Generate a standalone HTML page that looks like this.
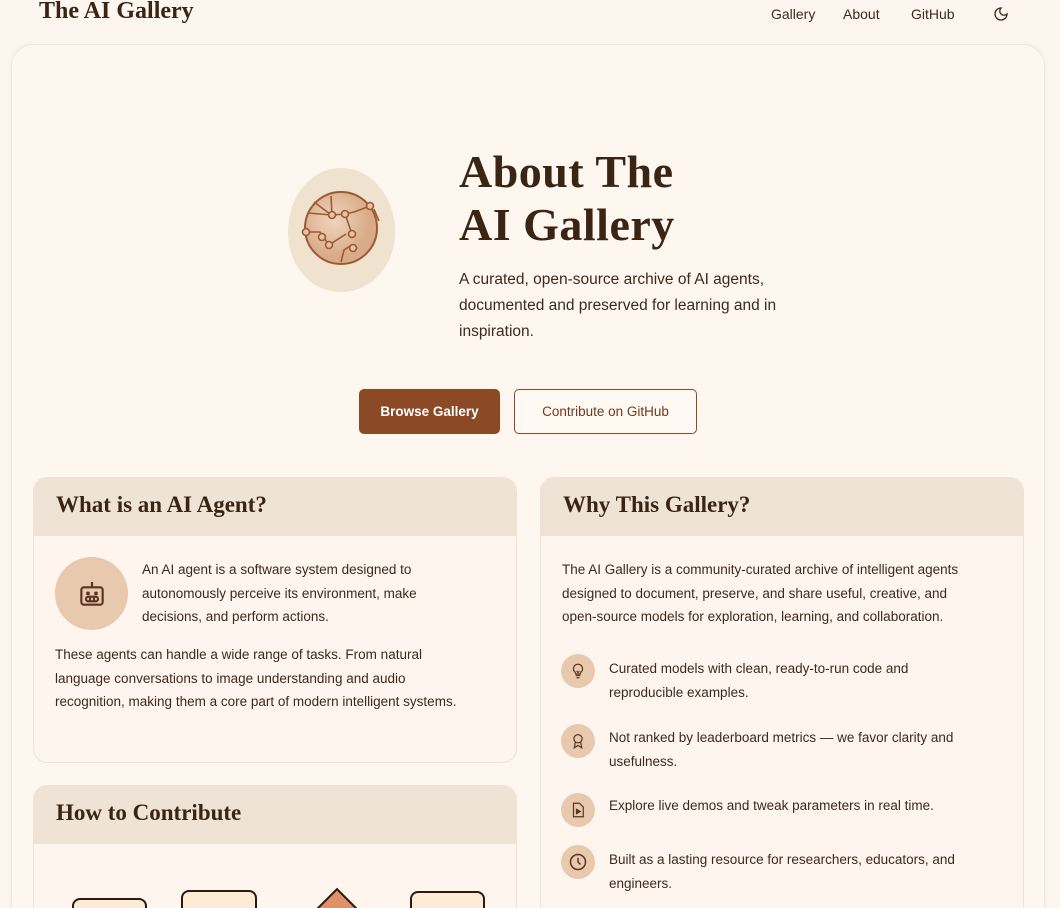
<!DOCTYPE html>
<html style="height:908px;overflow:hidden"><head><style>
*{box-sizing:border-box;margin:0;padding:0}
body{width:1060px;height:908px;overflow:hidden;background:#fdf6ef;font-family:"Liberation Sans",sans-serif;color:#3d2a1e;position:relative}
.serif{font-family:"Liberation Serif",serif;font-weight:bold;color:#3a2414}
.nav{position:absolute;top:0;left:0;right:0;height:30px}
.logo{position:absolute;left:39px;top:-2px;font-size:24px}
.nl{position:absolute;top:6px;font-size:14px;color:#3d2a1e}
.main{position:absolute;left:11px;top:44px;width:1034px;height:864px;border:1px solid #f1e6da;border-bottom:none;border-radius:22px 22px 0 0;background:#fef7f0;box-shadow:0 0 6px rgba(200,170,140,.15)}
.card{position:absolute;border:1px solid #efe2d4;border-radius:14px;background:#fdf5ee;overflow:hidden}
.cut{border-bottom:none;border-radius:14px 14px 0 0}
.ch{height:58px;background:#efe3d6;padding:14px 22px;font-size:23px}
.txt{font-size:13.5px;line-height:23.5px;color:#3d2a1e}
.ic{position:absolute;width:34px;height:34px;border-radius:50%;background:#e8c9ad;display:flex;align-items:center;justify-content:center}
</style></head><body>
<div class="nav">
<div class="logo serif">The AI Gallery</div>
<div class="nl" style="left:771px">Gallery</div>
<div class="nl" style="left:843px">About</div>
<div class="nl" style="left:911px">GitHub</div>
<svg style="position:absolute;left:993px;top:6px" width="16" height="16" viewBox="0 0 24 24" fill="none" stroke="#3d2a1e" stroke-width="2"><path d="M12 3a6 6 0 0 0 9 9 9 9 0 1 1-9-9z"/></svg>
</div>
<div class="main"></div>
<svg style="position:absolute;left:286px;top:166px" width="110" height="128" viewBox="0 0 110 128">
<defs><radialGradient id="g" cx="0.4" cy="0.4"><stop offset="0" stop-color="#efd5bd"/><stop offset="1" stop-color="#d9ab88"/></radialGradient></defs>
<path d="M55 2C85 2 109 30 109 66c0 36-26 60-54 60C25 126 2 100 2 66 2 30 25 2 55 2z" fill="#efe2cf"/>
<circle cx="55" cy="62" r="36" fill="url(#g)" stroke="#9a5a34" stroke-width="2"/>
<g stroke="#9a5a34" stroke-width="1.6" fill="#e8c2a0">
<path d="M20 66 L34 66 L43 79 L60 68 M45 30 L46 49 L59 48 L68 46 L84 40 M28 36 L44 48 M59 48 L66 68 M88 43 L93 55 M55 96 L58 84 L64 80 M22 47 L46 49" fill="none"/>
<circle cx="20" cy="66" r="3.5"/><circle cx="36" cy="71" r="3.5"/><circle cx="46" cy="49" r="3.5"/><circle cx="66" cy="68" r="3.5"/><circle cx="84" cy="40" r="3.5"/><circle cx="59" cy="48" r="3.5"/><circle cx="43" cy="79" r="3.5"/><circle cx="67" cy="82" r="3.5"/>
</g></svg>
<div class="serif" style="position:absolute;left:459px;top:145px;font-size:46px;line-height:53px;letter-spacing:0.5px">About The<br>AI Gallery</div>
<div style="position:absolute;left:459px;top:267px;width:345px;font-size:15.5px;line-height:26px;color:#3d2a1e">A curated, open-source archive of AI agents, documented and preserved for learning and in inspiration.</div>
<div style="position:absolute;left:359px;top:389px;width:141px;height:45px;background:#8b4a25;border-radius:5px;color:#fff;font-size:13.5px;font-weight:bold;display:flex;align-items:center;justify-content:center">Browse Gallery</div>
<div style="position:absolute;left:514px;top:389px;width:183px;height:45px;border:1px solid #8b4a25;border-radius:5px;color:#6b3a1e;font-size:13.5px;display:flex;align-items:center;justify-content:center;background:#fff9f3">Contribute on GitHub</div>

<div class="card" style="left:33px;top:477px;width:484px;height:286px">
<div class="ch serif">What is an AI Agent?</div>
<div style="position:absolute;left:21px;top:79px;width:73px;height:73px;border-radius:50%;background:#e8c9ad;display:flex;align-items:center;justify-content:center">
<svg width="32" height="32" viewBox="0 0 24 24" fill="none" stroke="#5a3420" stroke-width="1.6"><rect x="4" y="7" width="16" height="13" rx="2"/><path d="M12 3v4"/><circle cx="9" cy="11.5" r=".6" fill="#5a3420"/><circle cx="15" cy="11.5" r=".6" fill="#5a3420"/><rect x="7.5" y="14" width="9" height="3.5" rx="1.7"/><path d="M10.5 14v3.5M13.5 14v3.5"/></svg></div>
<div class="txt" style="position:absolute;left:108px;top:80px;width:310px">An AI agent is a software system designed to autonomously perceive its environment, make decisions, and perform actions.</div>
<div class="txt" style="position:absolute;left:21px;top:165px;width:410px">These agents can handle a wide range of tasks. From natural language conversations to image understanding and audio recognition, making them a core part of modern intelligent systems.</div>
</div>

<div class="card cut" style="left:33px;top:785px;width:484px;height:123px">
<div class="ch serif">How to Contribute</div>
<div style="position:absolute;left:38px;top:112px;width:75px;height:40px;border:2.5px solid #2a1a10;border-radius:8px;background:#fcebd5"></div>
<div style="position:absolute;left:147px;top:104px;width:76px;height:40px;border:2.5px solid #2a1a10;border-radius:8px;background:#fcebd5"></div>
<div style="position:absolute;left:283px;top:110px;width:40px;height:40px;border:2.5px solid #2a1a10;background:#e0916a;transform:rotate(45deg)"></div>
<div style="position:absolute;left:376px;top:105px;width:75px;height:40px;border:2.5px solid #2a1a10;border-radius:8px;background:#fcebd5"></div>
</div>

<div class="card cut" style="left:540px;top:477px;width:484px;height:431px">
<div class="ch serif">Why This Gallery?</div>
<div class="txt" style="position:absolute;left:21px;top:80px;width:415px">The AI Gallery is a community-curated archive of intelligent agents designed to document, preserve, and share useful, creative, and open-source models for exploration, learning, and collaboration.</div>
<div class="ic" style="left:20px;top:176px"><svg width="18" height="18" viewBox="0 0 24 24" fill="none" stroke="#5a3420" stroke-width="1.6"><path d="M9 18h6M10 21h4M12 3a6 6 0 0 0-4 10.5c.7.7 1 1.5 1 2.5h6c0-1 .3-1.8 1-2.5A6 6 0 0 0 12 3z"/><path d="M10 12l2 2 2-2"/></svg></div>
<div class="txt" style="position:absolute;left:68px;top:179px;width:340px">Curated models with clean, ready-to-run code and reproducible examples.</div>
<div class="ic" style="left:20px;top:246px"><svg width="18" height="18" viewBox="0 0 24 24" fill="none" stroke="#5a3420" stroke-width="1.6"><circle cx="12" cy="9" r="5.5"/><path d="M8.5 13.5L7 21l5-3 5 3-1.5-7.5"/></svg></div>
<div class="txt" style="position:absolute;left:68px;top:248px;width:380px">Not ranked by leaderboard metrics — we favor clarity and usefulness.</div>
<div class="ic" style="left:20px;top:315px"><svg width="18" height="18" viewBox="0 0 24 24" fill="none" stroke="#5a3420" stroke-width="1.6"><path d="M6 3h8l5 5v13H6z"/><path d="M10 11v6l5-3z" fill="#5a3420"/></svg></div>
<div class="txt" style="position:absolute;left:68px;top:316px;width:400px">Explore live demos and tweak parameters in real time.</div>
<div class="ic" style="left:20px;top:367px"><svg width="20" height="20" viewBox="0 0 24 24" fill="none" stroke="#5a3420" stroke-width="1.8"><circle cx="12" cy="12" r="9"/><path d="M12 7v5l3 3"/></svg></div>
<div class="txt" style="position:absolute;left:68px;top:370px;width:380px">Built as a lasting resource for researchers, educators, and engineers.</div>
</div>
</body></html>
